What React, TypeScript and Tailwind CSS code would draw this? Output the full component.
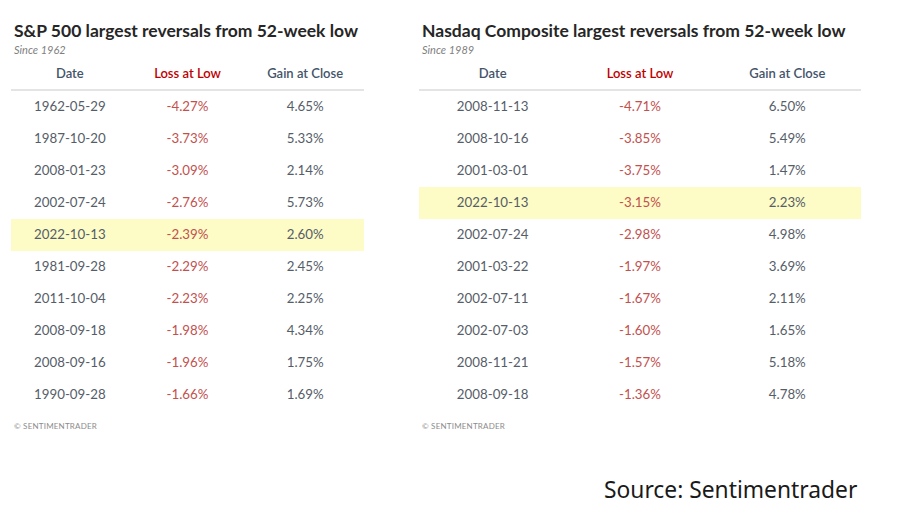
import React from 'react';

type Row = [string, string, string];

const spx: Row[] = [
  ['1962-05-29', '-4.27%', '4.65%'],
  ['1987-10-20', '-3.73%', '5.33%'],
  ['2008-01-23', '-3.09%', '2.14%'],
  ['2002-07-24', '-2.76%', '5.73%'],
  ['2022-10-13', '-2.39%', '2.60%'],
  ['1981-09-28', '-2.29%', '2.45%'],
  ['2011-10-04', '-2.23%', '2.25%'],
  ['2008-09-18', '-1.98%', '4.34%'],
  ['2008-09-16', '-1.96%', '1.75%'],
  ['1990-09-28', '-1.66%', '1.69%'],
];

const nasdaq: Row[] = [
  ['2008-11-13', '-4.71%', '6.50%'],
  ['2008-10-16', '-3.85%', '5.49%'],
  ['2001-03-01', '-3.75%', '1.47%'],
  ['2022-10-13', '-3.15%', '2.23%'],
  ['2002-07-24', '-2.98%', '4.98%'],
  ['2001-03-22', '-1.97%', '3.69%'],
  ['2002-07-11', '-1.67%', '2.11%'],
  ['2002-07-03', '-1.60%', '1.65%'],
  ['2008-11-21', '-1.57%', '5.18%'],
  ['2008-09-18', '-1.36%', '4.78%'],
];

function ReversalTable({ title, since, rows, width }: { title: string; since: string; rows: Row[]; width: string }) {
  return (
    <div className={`${width} shrink-0`}>
      <h2 className="pl-[3px] text-[17.5px] leading-[22px] font-bold text-[#262626]">{title}</h2>
      <p className="pl-[3px] mt-[1px] text-[11px] leading-[13px] italic text-[#7f7f7f]">{since}</p>
      <div className="mt-[3px] grid grid-cols-3 h-[32px] items-center text-center text-[13px] font-semibold border-b-2 border-[#e4e4e4]">
        <span className="text-[#44546a]">Date</span>
        <span className="text-[#c00000]">Loss at Low</span>
        <span className="text-[#44546a]">Gain at Close</span>
      </div>
      {rows.map((r) => (
        <div
          key={r[0] + r[1]}
          className={`grid grid-cols-3 h-[32px] items-center text-center text-[13.3px] ${r[0] === '2022-10-13' ? 'bg-[#fdfbc6]' : ''}`}
        >
          <span className="text-[#555d68]">{r[0]}</span>
          <span className="text-[#c2514e]">{r[1]}</span>
          <span className="text-[#555d68]">{r[2]}</span>
        </div>
      ))}
      <p className="pl-[3px] mt-[10px] text-[8px] leading-[10px] text-[#8c8c8c] tracking-[0.2px]">© SENTIMENTRADER</p>
    </div>
  );
}

export default function App() {
  return (
    <div className="w-[906px] h-[525px] bg-white relative overflow-hidden" style={{ fontFamily: 'Lato, "Open Sans", sans-serif' }}>
      <div className="flex gap-[55px] pl-[11px] pt-[20px]">
        <ReversalTable title="S&P 500 largest reversals from 52-week low" since="Since 1962" rows={spx} width="w-[353px]" />
        <ReversalTable title="Nasdaq Composite largest reversals from 52-week low" since="Since 1989" rows={nasdaq} width="w-[442px]" />
      </div>
      <p className="absolute left-[604px] top-[476px] text-[22.8px] leading-[28px] text-[#1a1a1a]" style={{ fontFamily: '"Noto Sans", sans-serif' }}>
        Source: Sentimentrader
      </p>
    </div>
  );
}
